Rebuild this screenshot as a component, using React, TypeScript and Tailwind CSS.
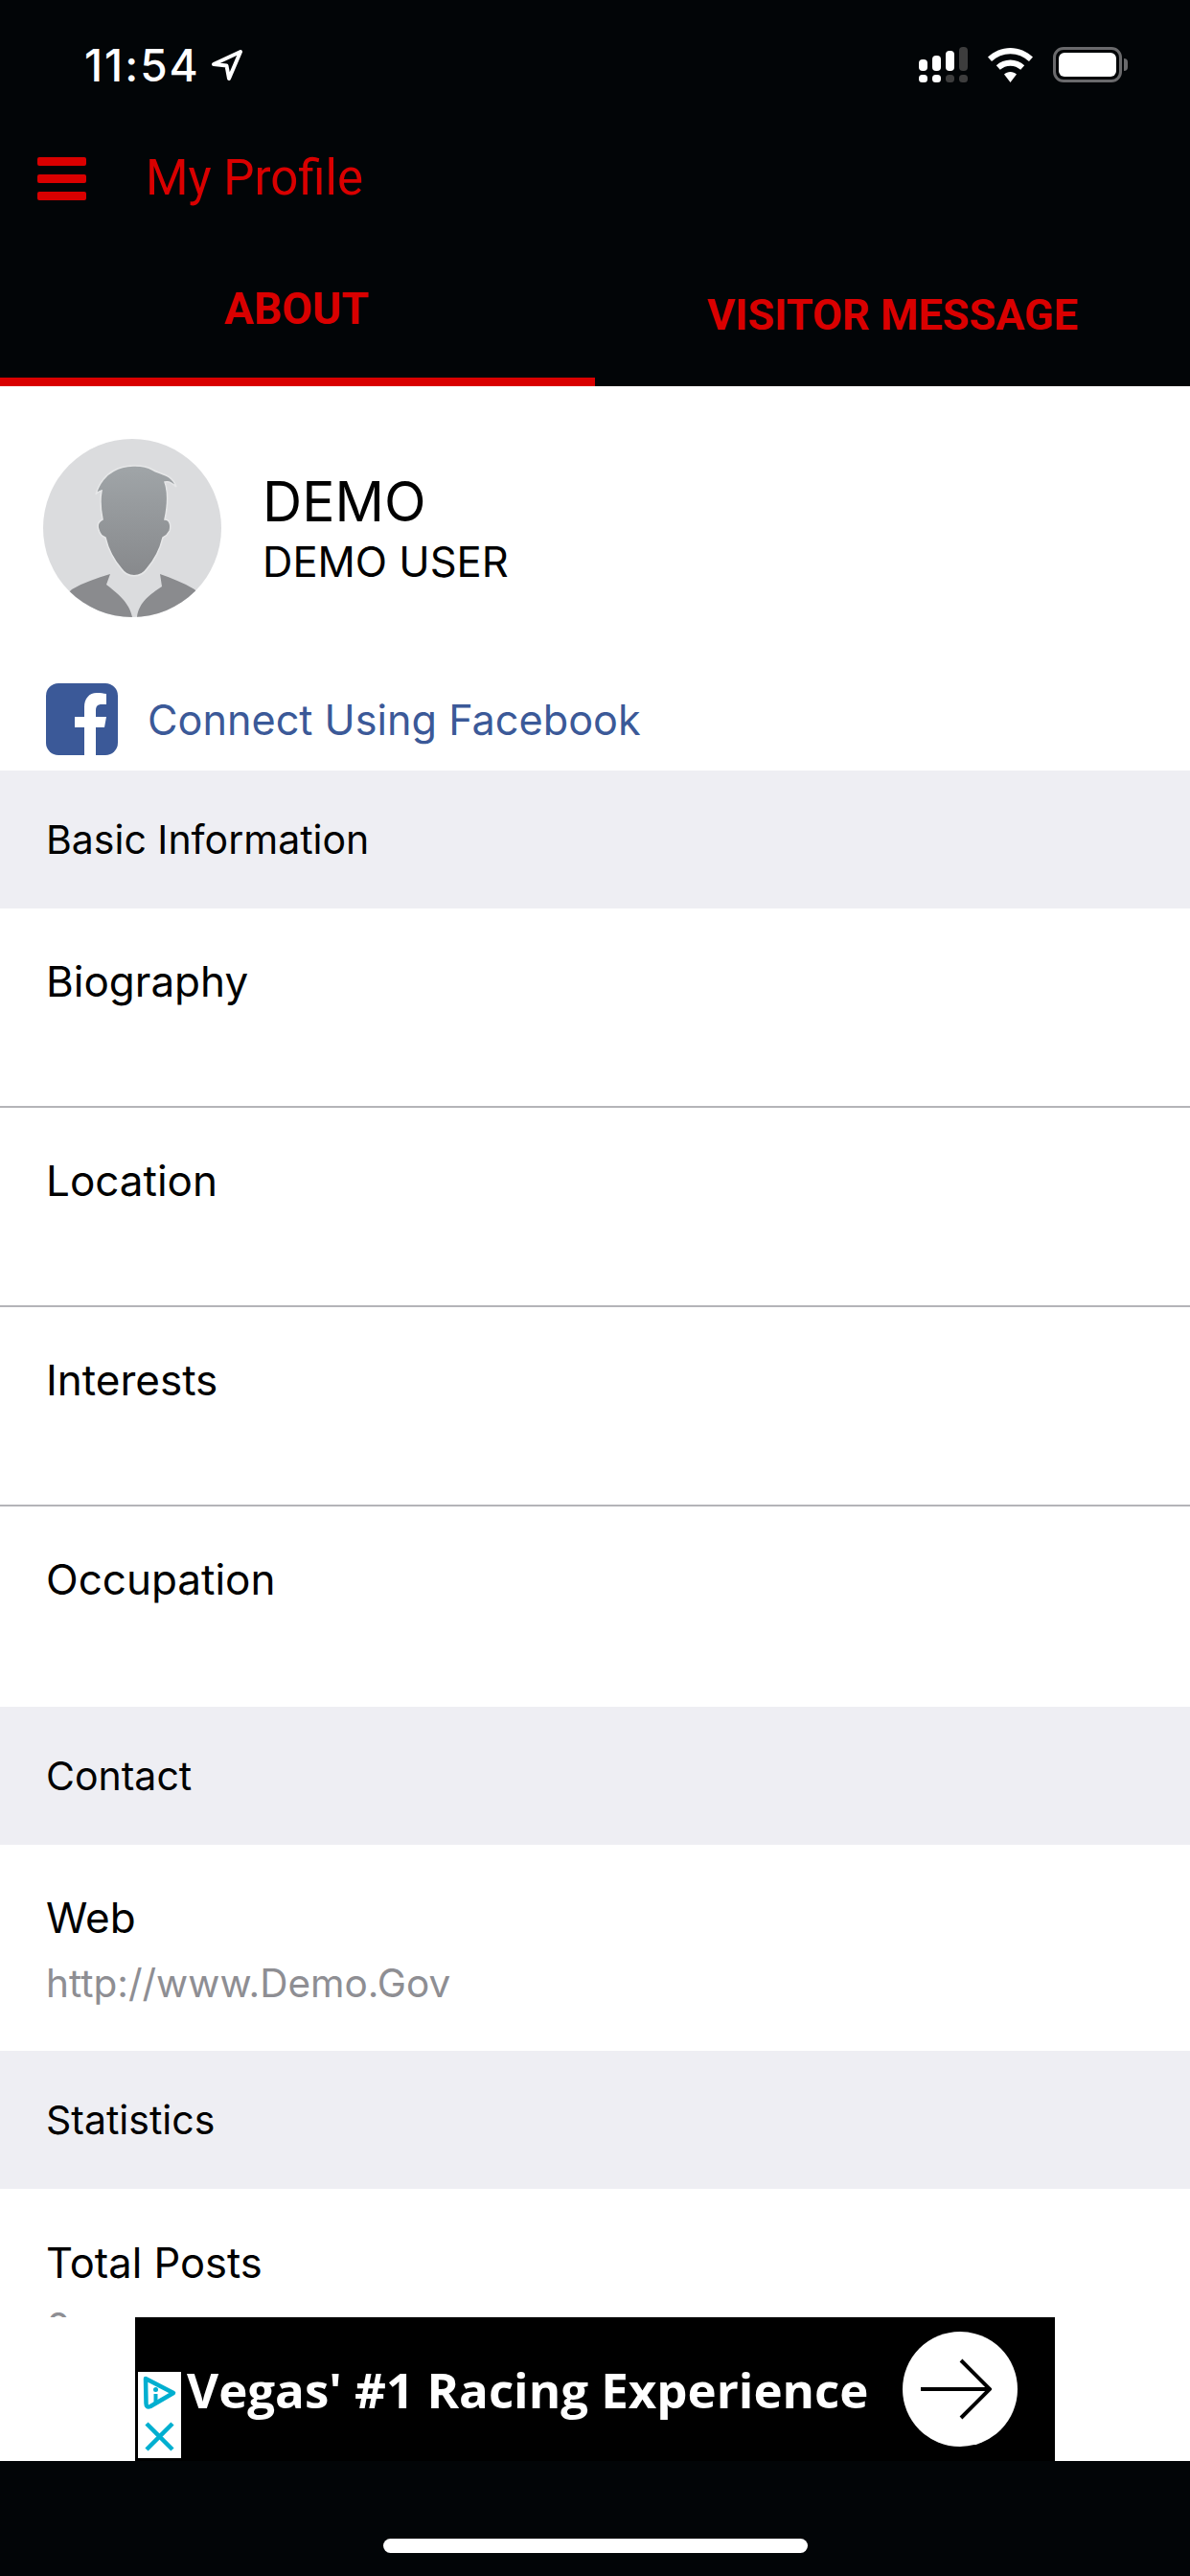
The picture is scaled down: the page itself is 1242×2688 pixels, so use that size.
import React from "react";

const RED = "text-[#d90000]";

function Row({ label, border, tall }: { label: string; border?: boolean; tall?: boolean }) {
  return (
    <div className={`${tall ? "h-[209px]" : "h-[208px]"} pl-[48px] pt-[50px] ${border ? "border-b-2 border-[#b4b4b8]" : ""}`}>
      <div className="text-[44px] leading-[52px] text-black">{label}</div>
    </div>
  );
}

function SectionHeader({ label }: { label: string }) {
  return (
    <div className="flex h-[144px] items-center bg-[#eeeef3] pl-[48px] pt-[2px]">
      <span className="text-[41px] text-black">{label}</span>
    </div>
  );
}

function StatusBar() {
  return (
    <div className="flex h-[130px] items-start justify-between pt-[48px] pl-[88px] pr-[65px]">
      <div className="-mt-[4px] flex items-center gap-[12px]">
        <span className="text-[46px] font-medium leading-[48px] tracking-[2px] text-white">11:54</span>
        <svg width="32" height="32" viewBox="0 0 32 32" fill="none">
          <path d="M2 15 L30 2 L18 30 L15.5 16.5 Z" stroke="#fff" strokeWidth="4" strokeLinejoin="round" />
        </svg>
      </div>
      <div className="flex items-center gap-[21px]">
        <svg width="51" height="37" viewBox="0 0 51 37">
          <rect x="0" y="13" width="9" height="12" rx="4" fill="#fff" />
          <rect x="14" y="9" width="9" height="16" rx="4" fill="#fff" />
          <rect x="28" y="4" width="9" height="21" rx="4" fill="#fff" />
          <rect x="42" y="0" width="9" height="25" rx="4" fill="#3d3d3d" />
          <rect x="0" y="29" width="9" height="8" rx="3.5" fill="#fff" />
          <rect x="14" y="29" width="9" height="8" rx="3.5" fill="#fff" />
          <rect x="28" y="29" width="9" height="8" rx="3.5" fill="#3d3d3d" />
          <rect x="42" y="29" width="9" height="8" rx="3.5" fill="#3d3d3d" />
        </svg>
        <svg width="47" height="36" viewBox="0 0 47 36" fill="#fff" className="mt-[2px]">
          <path d="M23.5 0C14.5 0 6.5 3.6 0 9.5l4 4.6C9.4 9.2 16.1 6.2 23.5 6.2S37.6 9.200 43 14.100l4-4.600C40.500 3.600 32.500 0 23.500 0Z" />
          <path d="M23.500 12.500c-5.600 0-10.700 2.200-14.700 5.700l4 4.600c2.900-2.500 6.600-4.100 10.700-4.100s7.800 1.600 10.700 4.100l4-4.600c-4-3.500-9.100-5.700-14.700-5.700Z" />
          <path d="M23.500 25c-2.500 0-4.800.9-6.500 2.400L23.500 36 30 27.400C28.300 25.900 26 25 23.500 25Z" />
        </svg>
        <div className="flex items-center gap-[2px]">
          <div className="h-[37px] w-[72px] rounded-[11px] border-[3px] border-[#6a6a6c] p-[3px]">
            <div className="h-full w-full rounded-[6px] bg-white" />
          </div>
          <div className="h-[13px] w-[4px] rounded-r-full bg-[#6a6a6c]" />
        </div>
      </div>
    </div>
  );
}

function Avatar() {
  return (
    <svg width="186" height="186" viewBox="0 0 186 186" className="shrink-0">
      <defs>
        <clipPath id="circ">
          <circle cx="93" cy="93" r="93" />
        </clipPath>
        <linearGradient id="head" x1="0" y1="0" x2="0" y2="1">
          <stop offset="0" stopColor="#a0a5a8" />
          <stop offset="1" stopColor="#87898c" />
        </linearGradient>
      </defs>
      <circle cx="93" cy="93" r="93" fill="#dbdcde" />
      <g clipPath="url(#circ)">
        <path d="M30 157C42 150 56 145 70 141L66 152C76 160 90 170 93 186L0 186Z" fill="#8a8b8e" />
        <path d="M158 157C146 150 134 145 122 141L124 154C112 162 100 170 98 186L186 186Z" fill="#8a8b8e" />
        <path
          d="M55 58C58 46 66 37 74 33C84 27 104 26 114 32C122 37 134 36 139 50C134 45 130 44 127 45C131 56 130 70 127 84C132 84 134 90 132 96C130 100 127 102 125 103C122 116 115 128 108 136C102 145 88 145 82 136C75 128 68 116 65 103C62 102 59 99 58 95C56 90 58 86 62 84C60 74 59 64 61 54C58 55 56 56 55 58Z"
          fill="url(#head)"
          stroke="#e6e7e8"
          strokeWidth="1.5"
        />
      </g>
    </svg>
  );
}

function FacebookIcon() {
  return (
    <svg width="75" height="75" viewBox="0 0 75 75" className="shrink-0">
      <rect width="75" height="75" rx="13" fill="#3b5998" />
      <path d="M52 75V46H61L63 35H52V28C52 24 54 22 58 22H63V11C60 10.500 57 10 53 10C45 10 40 16 40 25V35H30V46H40V75Z" fill="#fff" />
    </svg>
  );
}

function AdBadge() {
  return (
    <svg width="45" height="90" viewBox="0 0 45 90" fill="none" className="shrink-0 bg-white">
      <path d="M8 7L37 22L13 36Q8.500 38 8.500 33Z" stroke="#00afd0" strokeWidth="4.500" strokeLinejoin="round" />
      <circle cx="18.500" cy="18.500" r="2.500" fill="#00afd0" />
      <path d="M18.500 23V33" stroke="#00afd0" strokeWidth="4" />
      <path d="M9 54L36 81M36 54L9 81" stroke="#00afd0" strokeWidth="4.500" />
    </svg>
  );
}

export default function App() {
  return (
    <div className="flex h-[2688px] w-[1242px] flex-col overflow-hidden bg-white font-['Inter',sans-serif]">
      <header className="h-[403px] shrink-0 bg-[#020507]">
        <StatusBar />
        <div className="flex h-[110px] items-center pl-[39px] pt-[2px]">
          <div className="flex w-[113px] flex-col gap-[9px]">
            <div className="h-[9px] w-[51px] rounded-[2px] bg-[#d90000]" />
            <div className="h-[9px] w-[51px] rounded-[2px] bg-[#d90000]" />
            <div className="h-[9px] w-[51px] rounded-[2px] bg-[#d90000]" />
          </div>
          <span className={`font-['Roboto',sans-serif] text-[51px] font-normal ${RED}`}>My Profile</span>
        </div>
        <div className="flex h-[163px]">
          <div className="flex w-[621px] flex-col border-b-[9px] border-[#d90000]">
            <div className={`flex flex-1 items-start justify-center pt-[57px] pr-[2px] font-['Roboto',sans-serif] text-[46px] font-bold leading-[50px] ${RED}`}>
              ABOUT
            </div>
          </div>
          <div className={`flex w-[621px] items-start justify-center pt-[64px] font-['Roboto',sans-serif] text-[45px] font-bold leading-[50px] ${RED}`}>
            VISITOR MESSAGE
          </div>
        </div>
      </header>

      {/* list is cut off where the ad strip starts */}
      <main className="h-[2015px] shrink-0 overflow-hidden">
        <div className="flex items-center gap-[43px] pl-[45px] pt-[55px]">
          <Avatar />
          <div>
            <div className="text-[57px] leading-[66px] text-black">DEMO</div>
            <div className="mt-[4px] text-[43.500px] leading-[50px] text-black">DEMO USER</div>
          </div>
        </div>
        <div className="flex h-[160px] items-start gap-[31px] pl-[48px] pt-[69px]">
          <FacebookIcon />
          <span className="pt-[11px] text-[43.200px] leading-[54px] text-[#3b5998]">Connect Using Facebook</span>
        </div>
        <SectionHeader label="Basic Information" />
        <Row label="Biography" border />
        <Row label="Location" border />
        <Row label="Interests" border />
        <Row label="Occupation" tall />
        <SectionHeader label="Contact" />
        <div className="h-[215px] pl-[48px] pt-[50px]">
          <div className="text-[44px] leading-[52px] text-black">Web</div>
          <div className="mt-[19px] text-[40.500px] leading-[48px] text-[#8e8e93]">http://www.Demo.Gov</div>
        </div>
        <SectionHeader label="Statistics" />
        <div className="pl-[48px] pt-[51px]">
          <div className="text-[43.500px] leading-[52px] text-black">Total Posts</div>
          <div className="mt-[17px] text-[41px] leading-[48px] text-[#8e8e93]">0</div>
        </div>
      </main>

      <div className="flex h-[150px] shrink-0 justify-center">
        <div className="flex h-full w-[960px] items-end bg-black">
          <div className="mb-[3px] ml-[3px]">
            <AdBadge />
          </div>
          <div className="mb-[45px] ml-[6px] whitespace-nowrap font-['Open_Sans',sans-serif] text-[51px] font-bold leading-[60px] text-white">
            Vegas' #1 Racing Experience
          </div>
          <div className="mb-[15px] ml-auto mr-[39px] flex h-[120px] w-[120px] shrink-0 items-center justify-center rounded-full bg-white">
            <svg width="74" height="64" viewBox="0 0 74 64" fill="none" stroke="#000" strokeWidth="4" className="mr-[8px]">
              <path d="M0 32H72" />
              <path d="M42 2L72 32L42 62" />
            </svg>
          </div>
        </div>
      </div>

      <footer className="flex h-[120px] shrink-0 items-end justify-center bg-[#020507] pb-[24px]">
        <div className="h-[15px] w-[443px] rounded-full bg-white" />
      </footer>
    </div>
  );
}
